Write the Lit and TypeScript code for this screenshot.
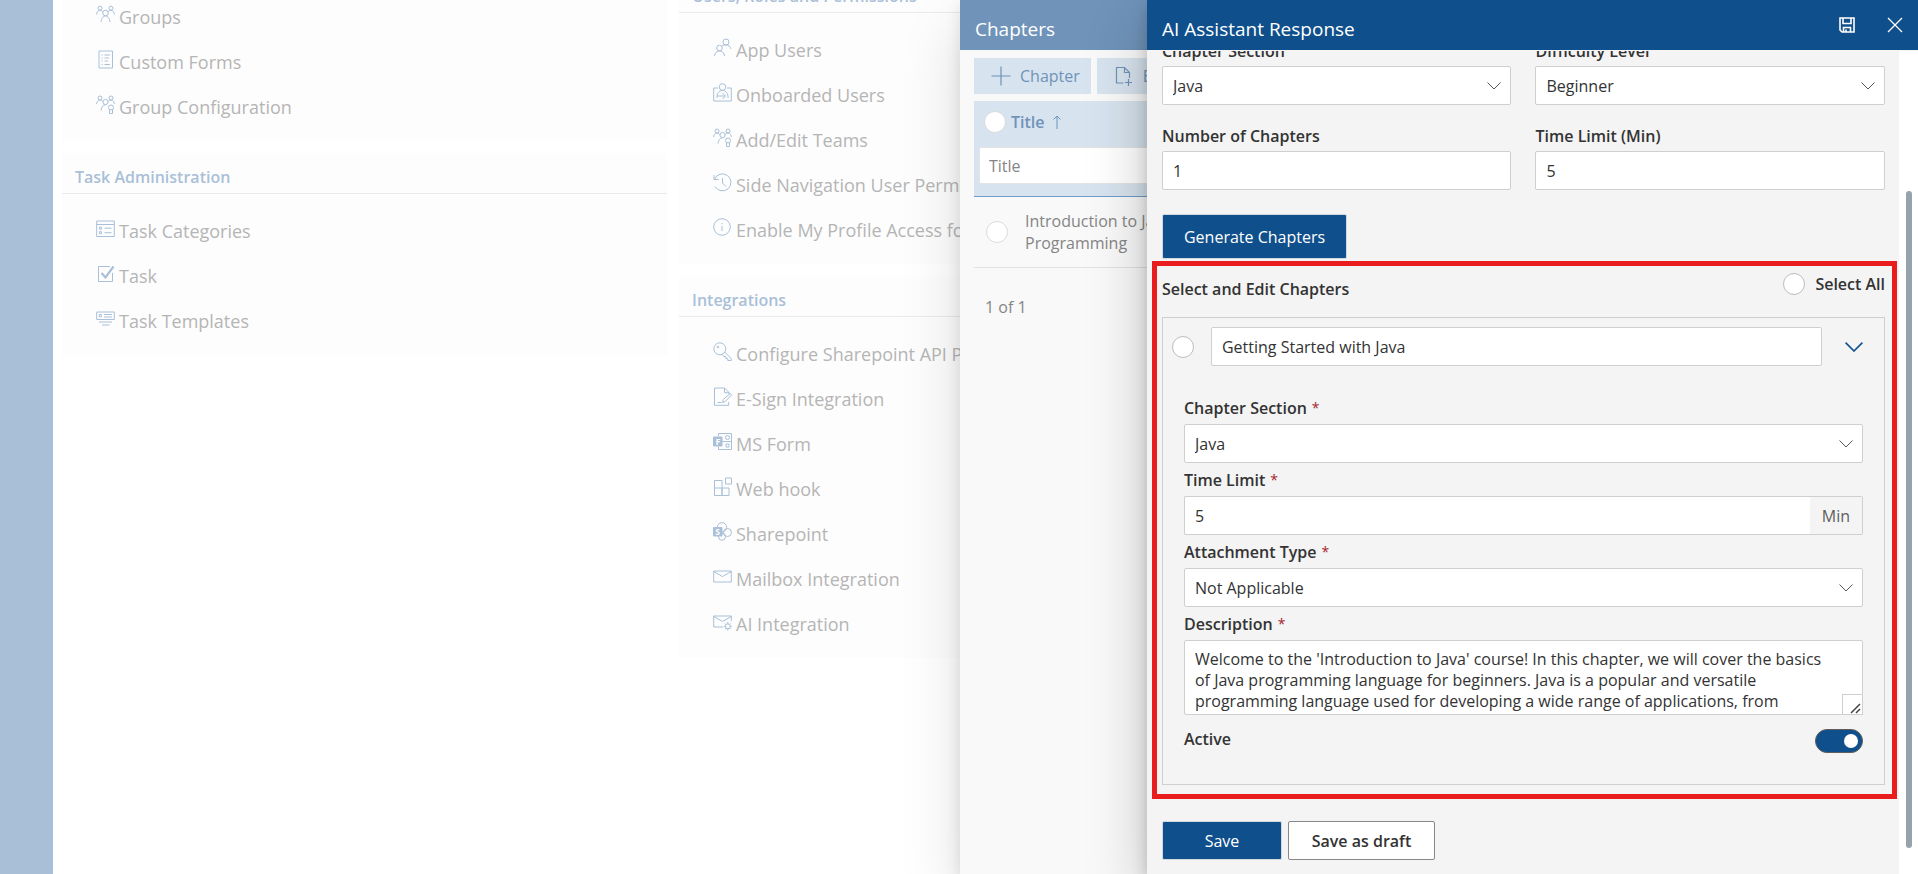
import { LitElement, html, css, svg, SVGTemplateResult } from "lit";
import { customElement, state } from "lit/decorators.js";

const FONT = css`"Open Sans", "Noto Sans", sans-serif`;

const icons: Record<string, SVGTemplateResult> = {
  groups: svg`<circle cx="4" cy="3.2" r="2"/><circle cx="15" cy="3.2" r="2"/><circle cx="9.5" cy="8" r="2.8"/><path d="M.6 9.5C.8 7 2 5.4 4 5.3c1.3 0 2.2.6 2.9 1.6M18.4 9.500C18.200 7 17 5.400 15 5.300c-1.300 0-2.200.6-2.900 1.600M5 17c.3-3.500 2-6 4.500-6s4.200 2.500 4.500 6"/>`,
  forms: svg`<path d="M3 1h13.500v17H3z"/><path d="M5.500 5h1.200M8.500 5H14M5.500 8h1.200M8.500 8H13M5.500 11h1.200M8.500 11H12M5.500 14.500h1.200M8.500 14.500H14"/>`,
  team: svg`<circle cx="4" cy="3" r="2"/><circle cx="15" cy="3" r="2"/><circle cx="9.500" cy="7" r="2.600"/><path d="M.6 9C.8 6.600 2 5.100 4 5c1.300 0 2.200.6 2.700 1.400M18.400 9C18.200 6.600 17 5.100 15 5c-1.300 0-2.200.6-2.700 1.400M5 15.500c.3-3.300 2-5.700 4.500-5.700"/><circle cx="15" cy="12.500" r="2.500"/><path d="M13.500 14.500V18.500h3v-4"/>`,
  categories: svg`<path d="M.7 2h17.600v15.500H.7zM.7 5.500h17.600"/><path d="M3.500 8.200h2v2h-2zM3.500 12.700h2v2h-2zM8.500 9.200h7M8.500 13.700h7"/>`,
  task: svg`<path d="M16.500 9v8.500H2.500v-15H14"/><path d="M5.500 9l4 4.500L17.500 2.500" stroke-width="2.200"/>`,
  templates: svg`<path d="M.7 3h17.600v7.500H.7z"/><path d="M3.300 5.500h2v2.300h-2zM8 5.500h8M8 8h8M3 13h13M6 16h7.500"/>`,
  appUsers: svg`<circle cx="13" cy="4" r="3"/><circle cx="6.500" cy="10" r="2.800"/><path d="M9 7.800C10 7 11.500 6.900 13 6.900c2.800 0 4.400 1.700 4.800 4M1.500 18c.3-3 2-5 5-5s4.700 2 5 5"/>`,
  onboard: svg`<path d="M5 5H.7v13h17.600V5H14"/><circle cx="9.500" cy="4" r="3.300"/><path d="M4 15c-.3-4.500 2-7.500 5.500-7.500s5.800 3 5.500 7.500M4 13h8M9.500 10l3 3-3 3"/>`,
  history: svg`<path d="M1 2v4.500h4.500M1.500 6.300A8.500 8.500 0 1 1 2 13.500"/><path d="M9.500 5v5l3.500 3.500"/>`,
  info: svg`<circle cx="9" cy="9" r="8.300"/><path d="M9 8v5M9 5v1.300"/>`,
  key: svg`<circle cx="6.800" cy="6.800" r="6"/><circle cx="5" cy="5" r=".8"/><path d="M11.800 10.200l6.500 6.300v2h-3.500v-2h-2V14.500h-2l-1.500-2"/>`,
  esign: svg`<path d="M16 7.500V5.500L11.500 1H1.500v17.300h14.200V15M11.500 1v4.700H16M4.500 15.500h4"/><path d="M9.500 15.500l.8-3 7-6 1.300 1.400-6.500 6.800z"/>`,
  msform: svg`<path d="M5.500 4V1.500h13v16h-13V15M9 9.500h9"/><circle cx="14.500" cy="5.500" r="2"/><path d="M13 12h3v3h-3z"/><path d="M.5 5h8.500v9H.5z" fill="currentColor"/><text x="2.600" y="12.600" font-size="9" font-weight="700" fill="#fdfdfd" stroke="none">F</text>`,
  webhook: svg`<path d="M1.500 3.500h7.500v15H1.500zM1.500 11H16v7.500H9V11M12.500 1h6v6h-6z"/>`,
  sharepoint: svg`<circle cx="9" cy="5.300" r="4.700"/><circle cx="14.500" cy="10.500" r="4"/><circle cx="9" cy="14.800" r="3.500"/><path d="M.5 5.500h8.500v8.500H.5z" fill="currentColor"/><text x="2.300" y="12.800" font-size="8.500" font-weight="700" fill="#fdfdfd" stroke="none">S</text>`,
  mail: svg`<path d="M.7 4h17.600v11H.7zM.7 4.500l8.800 5 8.800-5"/>`,
  mailGear: svg`<path d="M10 15H.7V4h17.600v5M.7 4.500l8.800 5 8.800-5"/><circle cx="14.800" cy="14.300" r="2.500"/><path d="M14.800 10v1.800M14.800 16.800v1.800M10.800 14.300h1.500M17.300 14.300h1.500M12 11.500l1.100 1.100M16.600 16.100l1.100 1.100M17.700 11.500l-1.100 1.100M13.100 16.100L12 17.200"/>`,
};

interface Item { icon: string; text: string; }
interface Group { title: string; items: Item[]; }

const columns: Group[][] = [
  [
    { title: "", items: [
      { icon: "groups", text: "Groups" },
      { icon: "forms", text: "Custom Forms" },
      { icon: "team", text: "Group Configuration" },
    ] },
    { title: "Task Administration", items: [
      { icon: "categories", text: "Task Categories" },
      { icon: "task", text: "Task" },
      { icon: "templates", text: "Task Templates" },
    ] },
  ],
  [
    { title: "Users, Roles and Permissions", items: [
      { icon: "appUsers", text: "App Users" },
      { icon: "onboard", text: "Onboarded Users" },
      { icon: "team", text: "Add/Edit Teams" },
      { icon: "history", text: "Side Navigation User Permissions" },
      { icon: "info", text: "Enable My Profile Access for Users" },
    ] },
    { title: "Integrations", items: [
      { icon: "key", text: "Configure Sharepoint API Permissions" },
      { icon: "esign", text: "E-Sign Integration" },
      { icon: "msform", text: "MS Form" },
      { icon: "webhook", text: "Web hook" },
      { icon: "sharepoint", text: "Sharepoint" },
      { icon: "mail", text: "Mailbox Integration" },
      { icon: "mailGear", text: "AI Integration" },
    ] },
  ],
];

/** Settings page that sits behind the open panels. */
@customElement("settings-page")
export class SettingsPage extends LitElement {
  static styles = css`
    :host { display: grid; grid-template-columns: 53px minmax(0, 1fr); height: 100vh; overflow: hidden; font-family: ${FONT}; background: #fff; }
    .rail { background: #a9bfd7; }
    .board { display: grid; grid-template-columns: repeat(3, minmax(0, 1fr)); gap: 12px; padding: 0 17px 0 9px; align-items: start; overflow: hidden; }
    .column { display: flex; flex-direction: column; gap: 12px; }
    .column.first { margin-top: -20px; }
    .column.second { margin-top: -28px; }
    .card { background: #fdfdfd; padding-bottom: 12px; }
    .title { margin: 0; height: 41px; box-sizing: border-box; padding: 8px 13px 0; border-bottom: 1px solid #e9eaeb; display: flex; align-items: center; font-size: 16px; font-weight: 600; color: #a9c0d8; white-space: nowrap; }
    .list { list-style: none; margin: 0; padding: 14px 0 0 34px; }
    .link { display: flex; align-items: center; gap: 4px; height: 45px; color: #b5b5b5; text-decoration: none; font-size: 18px; font-weight: 400; white-space: nowrap; }
    .icon { width: 19px; height: 19px; flex: none; color: #a9c0d8; fill: none; stroke: currentColor; margin-bottom: 4px; overflow: visible; }
  `;

  render() {
    return html`
      <nav class="rail" aria-label="Main"></nav>
      <main class="board">
        ${columns.map((groups, i) => html`
          <div class="column ${i === 0 ? "first" : "second"}">
            ${groups.map((g) => html`
              <section class="card">
                ${g.title ? html`<h2 class="title">${g.title}</h2>` : ""}
                <ul class="list">
                  ${g.items.map((it) => html`
                    <li><a class="link" href="#"><svg class="icon" viewBox="0 0 19 19" aria-hidden="true">${icons[it.icon]}</svg>${it.text}</a></li>`)}
                </ul>
              </section>`)}
          </div>`)}
      </main>`;
  }
}

/** Chapters list panel. */
@customElement("chapters-panel")
export class ChaptersPanel extends LitElement {
  static styles = css`
    :host { display: block; background: #f9f9f9; font-family: ${FONT}; font-size: 16px; color: #858585; overflow: hidden; }
    .head { margin: 0; height: 50px; box-sizing: border-box; padding: 8px 15px 0; display: flex; align-items: center; background: #6f93b9; color: #fff; font-size: 19px; font-weight: 400; }
    .content { padding: 8px 14px; }
    .tools { display: flex; gap: 6px; }
    .tool { display: flex; align-items: center; gap: 9px; height: 36px; padding: 0 11px 0 17px; border: 0; background: #d7e3ee; color: #6f93b9; font: inherit; }
    .tool svg { width: 20px; height: 20px; fill: none; stroke: currentColor; stroke-width: 1.2; }
    .grid { width: 100%; margin-top: 7px; border-collapse: collapse; }
    .grid th { padding: 10px 5px 12px; text-align: left; background: #d7e3ee; border-bottom: 1px solid #6f9ccb; color: #6f93b9; font-weight: 600; }
    .sort { display: flex; align-items: center; gap: 5px; height: 22px; padding-left: 5px; margin-bottom: 14px; }
    .sort svg { width: 10px; height: 14px; margin-left: 2px; fill: none; stroke: currentColor; }
    .filter { display: block; width: 100%; height: 37px; box-sizing: border-box; border: 1px solid #e3e3e3; border-radius: 2px; padding: 0 9px; font: inherit; font-weight: 400; background: #fff; color: #858585; }
    .filter::placeholder { color: #858585; opacity: 1; }
    .grid td { padding: 12px; border-bottom: 1px solid #e1e1e1; }
    .row { display: flex; align-items: center; gap: 17px; }
    .name { width: 160px; line-height: 22px; padding: 1px 0; }
    .round { appearance: none; margin: 0; width: 22px; height: 22px; border: 1px solid #dcdcdc; border-radius: 50%; background: #fff; }
    .pages { padding: 28px 11px; line-height: 22px; }
  `;

  render() {
    return html`
      <h1 class="head">Chapters</h1>
      <div class="content">
        <div class="tools">
          <button class="tool"><svg viewBox="0 0 20 20" aria-hidden="true"><path d="M10 .5v19M.5 10h19"/></svg>Chapter</button>
          <button class="tool"><svg viewBox="0 0 20 20" aria-hidden="true"><path d="M9.500 17H2.500V1.500h8l5 5V12M10.500 1.500v5h5M14.500 13v7M11 16.500h7"/></svg>Export</button>
        </div>
        <table class="grid">
          <thead>
            <tr><th>
              <div class="sort">
                <input class="round" type="checkbox" aria-label="Select all rows">
                <span>Title</span>
                <svg viewBox="0 0 10 14" aria-hidden="true"><path d="M5 14V1M1.500 4.500L5 1l3.500 3.500"/></svg>
              </div>
              <input class="filter" type="text" placeholder="Title" aria-label="Filter by title">
            </th></tr>
          </thead>
          <tbody>
            <tr><td><div class="row">
              <input class="round" type="checkbox" aria-label="Select row">
              <div class="name">Introduction to Java Programming</div>
            </div></td></tr>
          </tbody>
        </table>
        <div class="pages">1 of 1</div>
      </div>`;
  }
}

/** AI assistant response panel with the chapter form. */
@customElement("assistant-panel")
export class AssistantPanel extends LitElement {
  static styles = css`
    :host { display: flex; flex-direction: column; background: #f4f4f4; font-family: ${FONT}; font-size: 16px; line-height: 22px; color: #333; }
    .head { flex: none; height: 50px; box-sizing: border-box; padding: 0 15px; display: flex; align-items: center; background: #0f4f8b; color: #fff; }
    .head h1 { flex: 1; margin: 0; padding-top: 8px; font-size: 19px; line-height: 26px; font-weight: 400; }
    .tool { display: flex; padding: 0; border: 0; background: none; color: #fff; }
    .tool svg { width: 16px; height: 16px; fill: none; stroke: currentColor; }
    .tool + .tool { margin-left: 32px; }
    .frame { flex: 1; min-height: 0; display: grid; grid-template-columns: minmax(0, 1fr) 19px; padding-top: 1px; }
    .scroll { overflow: hidden; padding: 0 14px 0 15px; }
    .gutter { display: flex; flex-direction: column; align-items: center; background: #fff; }
    .gutter .above { flex: 140 0 0; }
    .gutter .thumb { flex: 657 0 0; width: 6px; border-radius: 3px; background: #98a2ab; }
    .gutter .below { flex: 26 0 0; }

    .params { display: grid; grid-template-columns: 1fr 1fr; gap: 15px 24px; margin-top: -16px; }
    .field { display: flex; flex-direction: column; }
    .label { height: 31px; display: flex; align-items: center; font-weight: 600; }
    .required { color: #a4262c; font-size: 14px; font-weight: 400; margin-left: 5px; }
    .box { width: 100%; height: 39px; box-sizing: border-box; border: 1px solid #cfcfcf; border-radius: 2px; padding: 0 10px; margin: 0; background: #fff; color: #333; font: inherit; appearance: none; outline: 0; }
    .stack { display: grid; }
    .stack > * { grid-area: 1 / 1; }
    .chevron { justify-self: end; align-self: center; width: 14px; height: 8px; margin-right: 10px; fill: none; stroke: #555; pointer-events: none; }

    .primary { height: 45px; margin-top: 24px; padding: 0 21px; border: 1px solid #d0d7de; border-radius: 2px; background: #0f4f8b; color: #fff; font: inherit; }
    .marked { border: 5px solid #e91c1e; margin: 2px -12px 0 -10px; padding: 0 7px 9px 5px; }
    .top { display: flex; justify-content: space-between; height: 51px; align-items: flex-start; }
    .top h2 { margin: 12px 0 0; font-size: 16px; line-height: 22px; font-weight: 600; }
    .all { display: flex; align-items: center; gap: 10px; margin-top: 5px; height: 26px; font-weight: 600; }
    .round { appearance: none; flex: none; width: 22px; height: 22px; margin: 0; border: 1px solid #bdbdbd; border-radius: 50%; background: #fff; }
    .chapter { border: 1px solid #cfcfcf; padding-bottom: 31px; }
    .bar { display: flex; align-items: center; padding: 9px 21px 0 9px; }
    .bar .box { flex: 1; margin: 0 23px 0 17px; }
    .toggle { display: flex; padding: 0; border: 0; background: none; color: #0f4f8b; }
    .toggle svg { width: 18px; height: 10px; fill: none; stroke: currentColor; stroke-width: 1.6; }
    .details { display: flex; flex-direction: column; padding: 25px 21px 0; }
    .details .label { height: 33px; }
    .suffixed { display: flex; }
    .suffixed .box { flex: 1; border-right: 0; border-radius: 2px 0 0 2px; min-width: 0; }
    .suffix { display: flex; align-items: center; padding: 0 12px; border: 1px solid #cfcfcf; border-left: 0; border-radius: 0 2px 2px 0; color: #605e5c; }
    .text { display: block; height: 75px; padding: 8px 26px 0 10px; line-height: 21px; resize: none; overflow: hidden; }
    .grip { place-self: end; width: 21px; height: 21px; border: 1px solid #cfcfcf; box-sizing: border-box; background: #fff; fill: none; stroke: #444; stroke-width: 1.5; pointer-events: none; }
    .active { display: flex; justify-content: space-between; align-items: center; padding-top: 14px; height: 24px; font-weight: 600; }
    .active label { padding-bottom: 4px; }
    .switch { appearance: none; display: flex; align-items: center; justify-content: flex-end; width: 48px; height: 24px; box-sizing: border-box; margin: 0; padding: 4px; border: 1px solid #605e5c; border-radius: 12px; background: #0f4f8b; }
    .switch::before { content: ""; width: 14px; height: 14px; border-radius: 50%; background: #fff; }
    .actions { display: flex; gap: 6px; padding: 22px 0 14px; }
    .save { width: 120px; height: 39px; padding: 0; border: 1px solid #d0d7de; border-radius: 2px; background: #0f4f8b; color: #fff; font: inherit; }
    .draft { width: 147px; height: 39px; padding: 0; border: 1px solid #8a8886; border-radius: 2px; background: #fff; color: #333; font: inherit; font-weight: 600; }
  `;

  @state() private open = true;

  private select(id: string, value: string) {
    return html`<div class="stack">
      <select class="box" id=${id}><option>${value}</option></select>
      <svg class="chevron" viewBox="0 0 14 8" aria-hidden="true"><path d="M.5.5L7 7 13.500.5"/></svg>
    </div>`;
  }

  private required(id: string, text: string) {
    return html`<label class="label" for=${id}>${text}<span class="required">*</span></label>`;
  }

  render() {
    return html`
      <header class="head">
        <h1>AI Assistant Response</h1>
        <button class="tool" aria-label="Save"><svg viewBox="0 0 16 16" stroke-width="1.6"><path d="M1 1h14v14H3L1 13zM4 1v5.500h8V1M4.500 15v-4.500h7V15M7 12.500V15"/></svg></button>
        <button class="tool" aria-label="Close"><svg viewBox="0 0 16 16" stroke-width="1.3"><path d="M1 1l14 14M15 1L1 15"/></svg></button>
      </header>
      <div class="frame">
        <div class="scroll">
          <div class="params">
            <div class="field"><label class="label" for="section">Chapter Section</label>${this.select("section", "Java")}</div>
            <div class="field"><label class="label" for="level">Difficulty Level</label>${this.select("level", "Beginner")}</div>
            <div class="field"><label class="label" for="count">Number of Chapters</label><input class="box" id="count" type="text" .value=${"1"}></div>
            <div class="field"><label class="label" for="limit">Time Limit (Min)</label><input class="box" id="limit" type="text" .value=${"5"}></div>
          </div>
          <button class="primary">Generate Chapters</button>
          <section class="marked">
            <div class="top">
              <h2>Select and Edit Chapters</h2>
              <label class="all"><input class="round" type="checkbox">Select All</label>
            </div>
            <div class="chapter">
              <div class="bar">
                <input class="round" type="checkbox" aria-label="Select chapter">
                <input class="box" type="text" aria-label="Chapter title" .value=${"Getting Started with Java"}>
                <button class="toggle" aria-label="Toggle details" aria-expanded=${this.open} @click=${() => (this.open = !this.open)}>
                  <svg viewBox="0 0 18 10"><path d="M.6.6L9 9 17.400.6"/></svg>
                </button>
              </div>
              ${this.open ? html`
              <div class="details">
                ${this.required("c-section", "Chapter Section")}
                ${this.select("c-section", "Java")}
                ${this.required("c-limit", "Time Limit")}
                <div class="suffixed"><input class="box" id="c-limit" type="text" .value=${"5"}><span class="suffix">Min</span></div>
                ${this.required("c-type", "Attachment Type")}
                ${this.select("c-type", "Not Applicable")}
                ${this.required("c-desc", "Description")}
                <div class="stack">
                  <textarea class="box text" id="c-desc" .value=${"Welcome to the 'Introduction to Java' course! In this chapter, we will cover the basics of Java programming language for beginners. Java is a popular and versatile programming language used for developing a wide range of applications, from"}></textarea>
                  <svg class="grip" viewBox="0 0 19 19" aria-hidden="true"><path d="M8 18l9-9M13 18l4-4"/></svg>
                </div>
                <div class="active"><label for="c-active">Active</label><input class="switch" id="c-active" type="checkbox" role="switch" checked></div>
              </div>` : ""}
            </div>
          </section>
          <div class="actions"><button class="save">Save</button><button class="draft">Save as draft</button></div>
        </div>
        <div class="gutter" aria-hidden="true"><div class="above"></div><div class="thumb"></div><div class="below"></div></div>
      </div>`;
  }
}

@customElement("app-root")
export class AppRoot extends LitElement {
  static styles = css`
    :host { display: block; position: relative; height: 100vh; overflow: hidden; }
    .chapters, .assistant { position: absolute; top: 0; right: 0; bottom: 0; }
    .chapters { width: calc(50% - 1px); box-shadow: 0 26px 58px rgba(0, 0, 0, .13), 0 5px 14px rgba(0, 0, 0, .11); }
    .assistant { width: 40.2%; box-shadow: 0 26px 58px rgba(0, 0, 0, .22), 0 5px 14px rgba(0, 0, 0, .18); }
  `;

  render() {
    return html`
      <settings-page></settings-page>
      <chapters-panel class="chapters"></chapters-panel>
      <assistant-panel class="assistant"></assistant-panel>`;
  }
}
